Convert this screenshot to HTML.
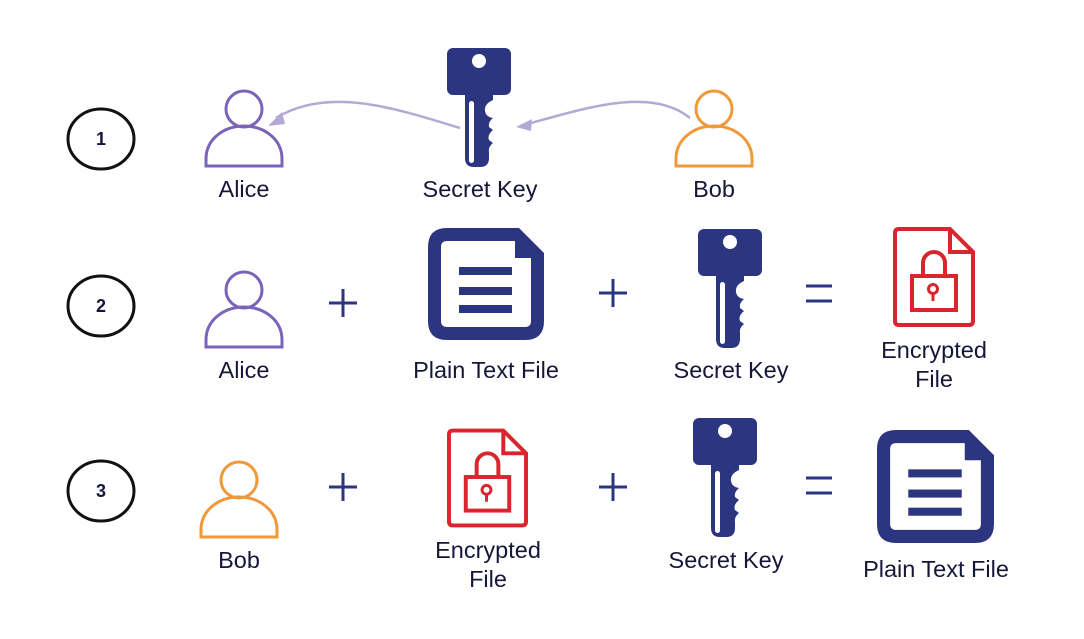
<!DOCTYPE html>
<html><head><meta charset="utf-8"><style>
html,body{margin:0;padding:0;background:#fff;}
svg{display:block}
text{font-family:"Liberation Sans",sans-serif;font-size:23.5px;fill:#16163a;text-anchor:middle}
</style></head><body>
<svg width="1084" height="639" viewBox="0 0 1084 639" xmlns="http://www.w3.org/2000/svg">
<defs>
<symbol id="key" viewBox="0 0 64 120">
<rect x="0" y="0" width="64" height="47" rx="6" fill="#2b3580"/>
<path d="M18,44 H46 V52 Q37,56 38,63 Q39,69 46,70 Q41,74 42,79 L46,82 Q40,87 42,92 L46,95 Q41,99 42,104 V110 Q42,119 33,119 H27 Q18,119 18,110 Z" fill="#2b3580"/>
<circle cx="32" cy="13" r="7" fill="#fff"/>
<rect x="22" y="53" width="5" height="62" rx="2.5" fill="#fff"/>
</symbol>
<symbol id="doc" viewBox="0 0 116 112">
<path d="M19,0 H91 L116,25 V93 Q116,112 97,112 H19 Q0,112 0,93 V19 Q0,0 19,0 Z" fill="#2b3580"/>
<path d="M19,13 H87 V30 H103 V93 Q103,99 97,99 H19 Q13,99 13,93 V19 Q13,13 19,13 Z" fill="#fff"/>
<rect x="31" y="39" width="53" height="8" fill="#2b3580"/>
<rect x="31" y="59" width="53" height="8" fill="#2b3580"/>
<rect x="31" y="77" width="53" height="8" fill="#2b3580"/>
</symbol>
<symbol id="enc" viewBox="0 0 82 100">
<path d="M6,2 H57 L80,25 V94 Q80,98 76,98 H6 Q2,98 2,94 V6 Q2,2 6,2 Z" fill="none" stroke="#d9262e" stroke-width="4"/>
<path d="M57,2 V25 H80" fill="none" stroke="#d9262e" stroke-width="4"/>
<path d="M30,48 V36 A11,11 0 0 1 52,36 V48" fill="none" stroke="#d9262e" stroke-width="4"/>
<rect x="19" y="49" width="44" height="34" fill="none" stroke="#d9262e" stroke-width="4"/>
<circle cx="40" cy="62" r="4.5" fill="none" stroke="#d9262e" stroke-width="3"/>
<line x1="40" y1="66" x2="40" y2="74" stroke="#d9262e" stroke-width="3"/>
</symbol>
<symbol id="person" viewBox="0 0 80 80">
<circle cx="40" cy="20" r="18" fill="none" stroke="currentColor" stroke-width="3"/>
<path d="M2,77 V70 C2,50 20,37 40,37 C60,37 78,50 78,70 V77 Z" fill="none" stroke="currentColor" stroke-width="3"/>
</symbol>
</defs>

<g fill="none" stroke="#111" stroke-width="3">
<ellipse cx="101" cy="139" rx="33" ry="30"/>
<ellipse cx="101" cy="306" rx="33" ry="30"/>
<ellipse cx="101" cy="491" rx="33" ry="30"/>
</g>
<text x="101" y="145" style="font-weight:bold;font-size:18px">1</text><text x="101" y="312" style="font-weight:bold;font-size:18px">2</text><text x="101" y="497" style="font-weight:bold;font-size:18px">3</text>

<use href="#person" x="204" y="89" width="80" height="80" style="color:#7a63b8"/>
<use href="#person" x="674" y="89" width="80" height="80" style="color:#f0993a"/>
<use href="#key" x="447" y="48" width="64" height="120"/>
<path d="M460,128 C400,110 330,85 276,118" fill="none" stroke="#b3a9d4" stroke-width="2.5"/>
<path d="M268,126 L282,112 L285,124 Z" fill="#b3a9d4"/>
<path d="M520,126 C580,110 650,85 690,118" fill="none" stroke="#b3a9d4" stroke-width="2.5"/>
<path d="M516,127 L532,119 L531,131 Z" fill="#b3a9d4"/>
<text x="244" y="197">Alice</text>
<text x="480" y="197">Secret Key</text>
<text x="714" y="197">Bob</text>

<use href="#person" x="204" y="270" width="80" height="80" style="color:#7a63b8"/>
<use href="#doc" x="428" y="228" width="116" height="112"/>
<use href="#key" x="698" y="229" width="64" height="120"/>
<use href="#enc" x="893" y="227" width="82" height="100"/>
<g stroke="#2b3580" stroke-width="3">
<line x1="329" y1="303" x2="357" y2="303"/><line x1="343" y1="289" x2="343" y2="317"/>
<line x1="599" y1="293" x2="627" y2="293"/><line x1="613" y1="279" x2="613" y2="307"/>
<line x1="806" y1="286" x2="832" y2="286"/><line x1="806" y1="301" x2="832" y2="301"/>
<line x1="329" y1="487" x2="357" y2="487"/><line x1="343" y1="473" x2="343" y2="501"/>
<line x1="599" y1="487" x2="627" y2="487"/><line x1="613" y1="473" x2="613" y2="501"/>
<line x1="806" y1="478" x2="832" y2="478"/><line x1="806" y1="493" x2="832" y2="493"/>
</g>
<text x="244" y="378">Alice</text>
<text x="486" y="378">Plain Text File</text>
<text x="731" y="378">Secret Key</text>
<text x="934" y="358">Encrypted</text>
<text x="934" y="387">File</text>

<use href="#person" x="199" y="460" width="80" height="80" style="color:#f0993a"/>
<use href="#enc" x="447" y="428" width="81" height="100"/>
<use href="#key" x="693" y="418" width="64" height="120"/>
<use href="#doc" x="877" y="428" width="117" height="117"/>
<text x="239" y="568">Bob</text>
<text x="488" y="558">Encrypted</text>
<text x="488" y="587">File</text>
<text x="726" y="568">Secret Key</text>
<text x="936" y="577">Plain Text File</text>
</svg>
</body></html>
